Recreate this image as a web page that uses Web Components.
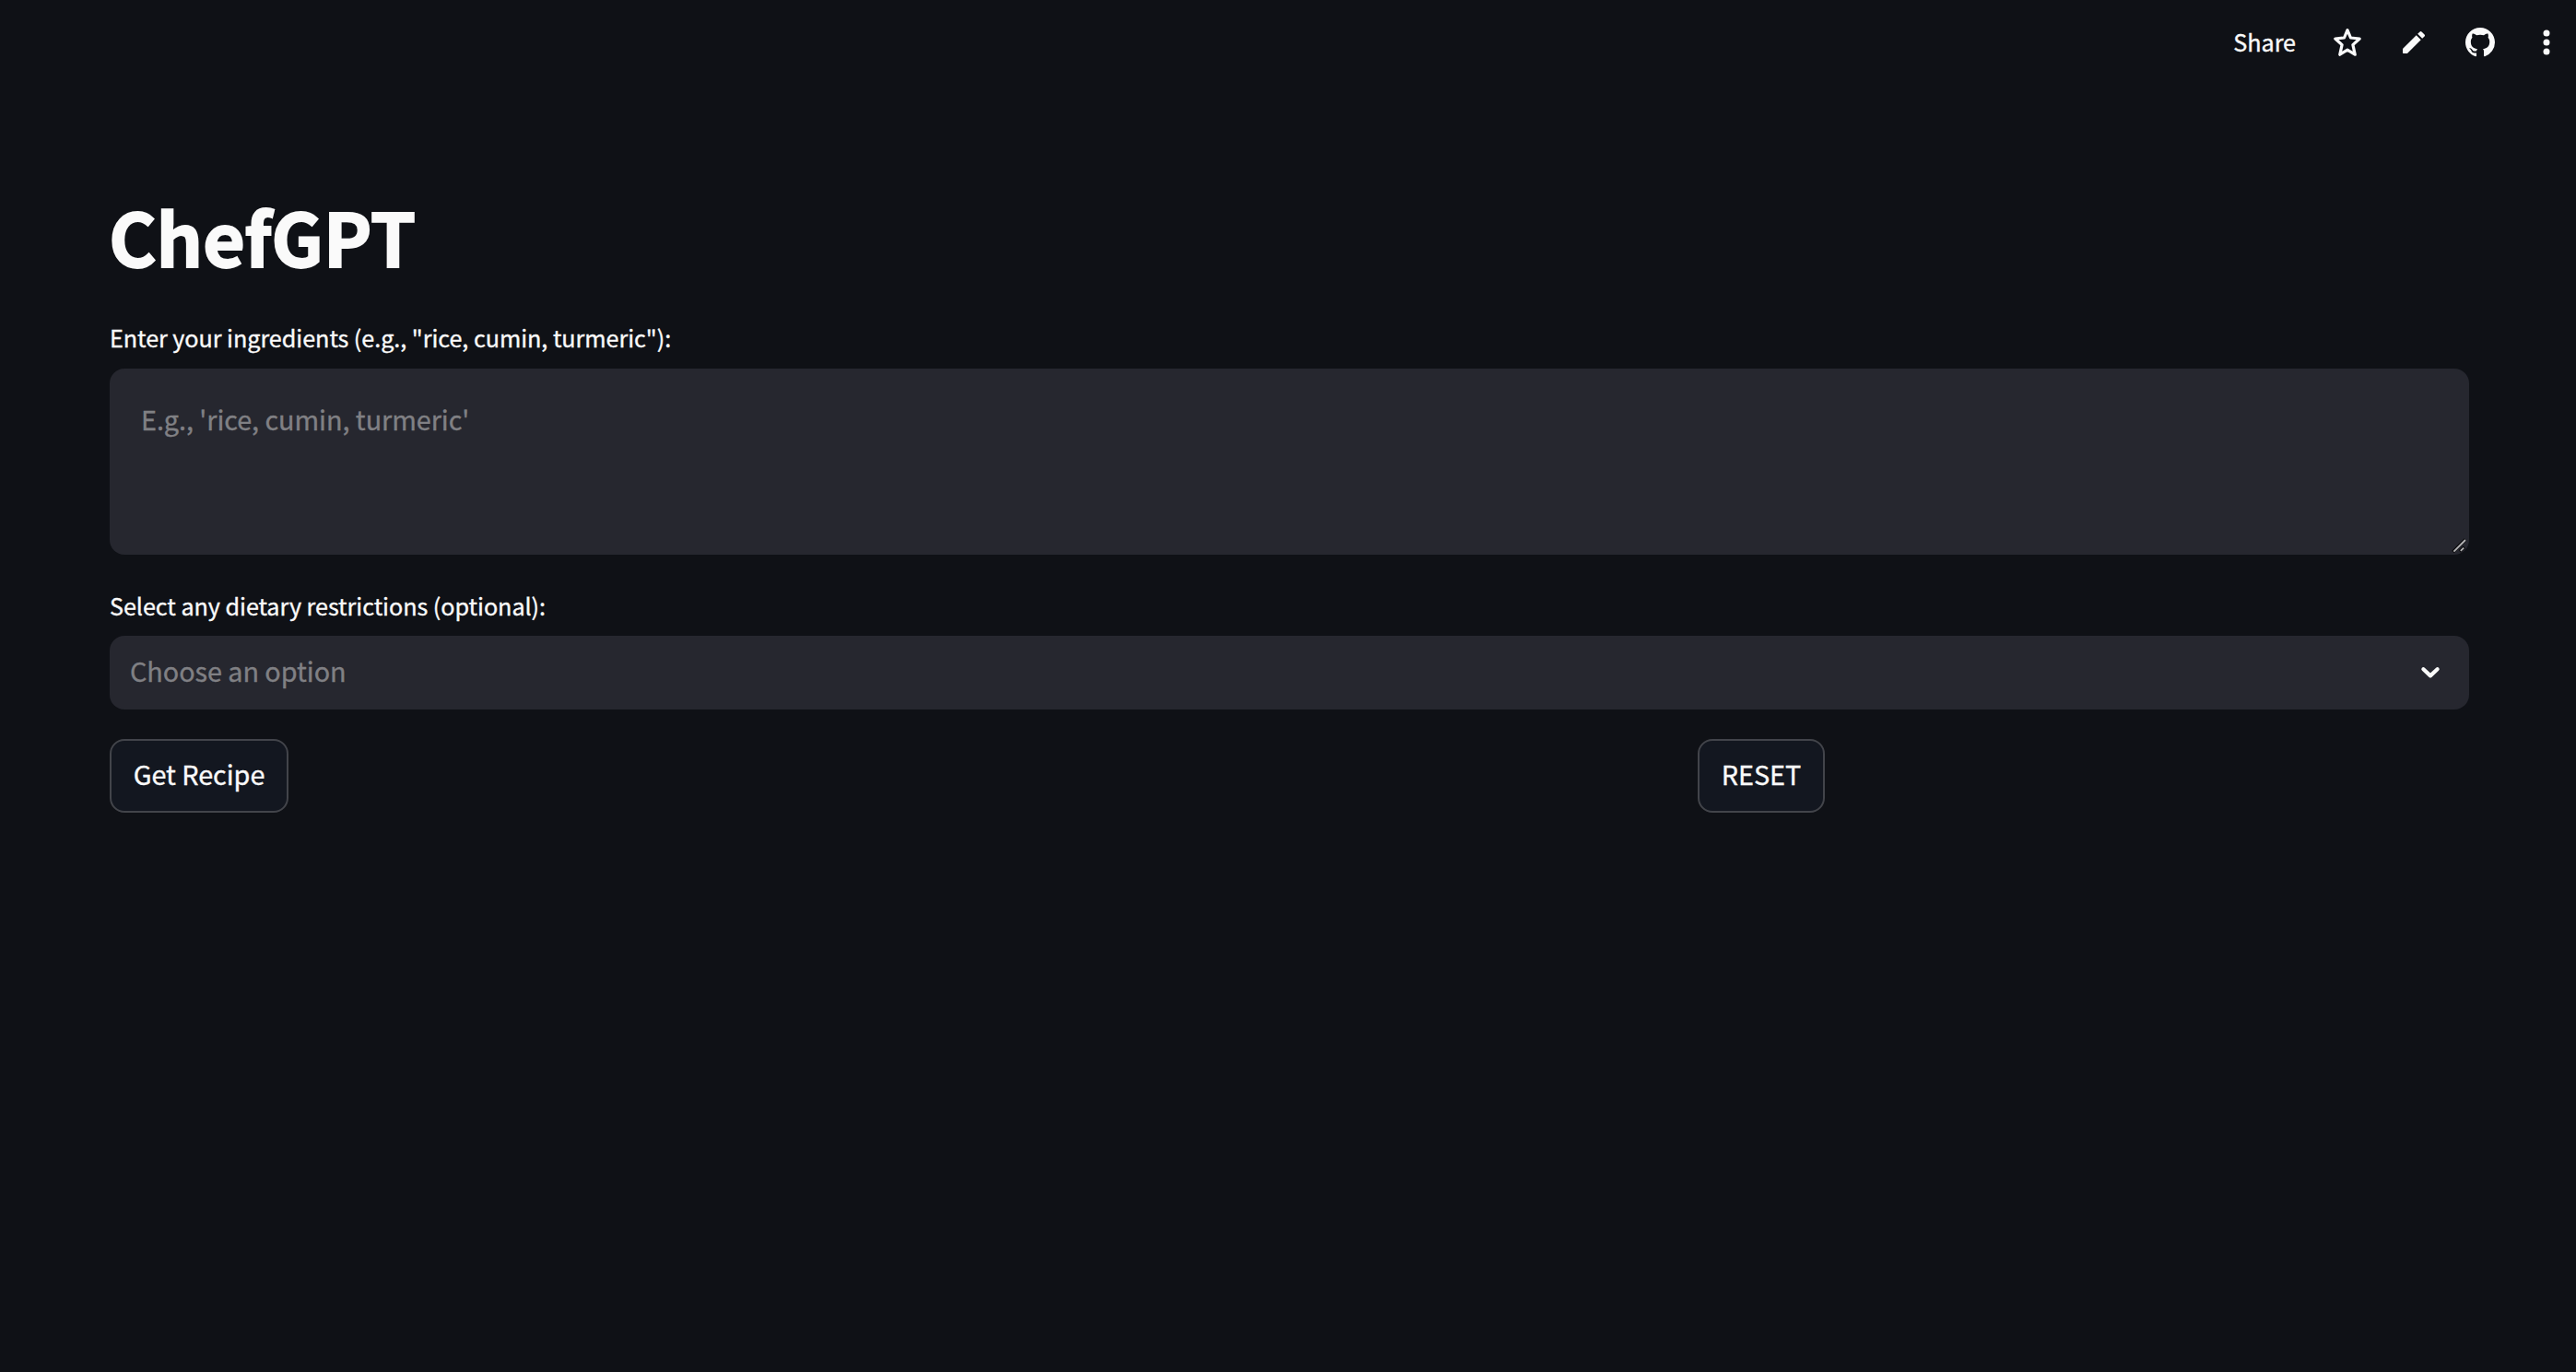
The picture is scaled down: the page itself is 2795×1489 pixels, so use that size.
<!DOCTYPE html>
<html lang="en"><head><meta charset="utf-8"><title>ChefGPT</title>
<style>
html,body{margin:0;min-height:100%;background:#0f1116}
body{font-family:"Noto Sans CJK SC",sans-serif;color:#fafafa;overflow:hidden;-webkit-text-stroke:.35px currentColor;letter-spacing:-.055px}
</style></head><body>
<chef-app></chef-app>
<script>
const define=(name,html)=>{
  const t=document.createElement('template');t.innerHTML=html;
  customElements.define(name,class extends HTMLElement{
    constructor(){super();this.attachShadow({mode:'open'}).append(t.content.cloneNode(true));}
  });
};
define('app-toolbar',`<style>
:host{display:flex;height:92px;box-sizing:border-box;padding-right:16px;justify-content:flex-end;align-items:center;gap:40px}
.share{font-size:25.2px;line-height:36px;margin-top:-2px}
svg{display:block;flex:none;fill:currentColor}
</style>
<span class="share">Share</span>
<svg width="32" height="32" viewBox="0 0 32 32"><path d="M16 2.7 19.5 11 29.2 12 21.9 18.6 24.2 29.2 16 24.2 7.8 29.2 10.1 18.6 2.8 12 12.5 11Z" fill="none" stroke="currentColor" stroke-width="3.2" stroke-linejoin="round"/></svg>
<svg width="32" height="32" viewBox="0 0 24 24"><path d="M3 17.46v3.04c0 .28.22.5.5.5h3.04c.13 0 .26-.05.35-.15L17.81 9.94l-3.75-3.75L3.15 17.1c-.1.1-.15.22-.15.36zM20.71 7.04a.996.996 0 0 0 0-1.41l-2.34-2.34a.996.996 0 0 0-1.41 0l-1.83 1.83 3.75 3.75 1.83-1.83z"/></svg>
<svg width="32" height="32" viewBox="0 0 16 16"><path d="M8 0C3.58 0 0 3.58 0 8c0 3.54 2.29 6.53 5.47 7.59.4.07.55-.17.55-.38 0-.19-.01-.82-.01-1.49-2.01.37-2.53-.49-2.69-.94-.09-.23-.48-.94-.82-1.13-.28-.15-.68-.52-.01-.53.63-.01 1.08.58 1.23.82.72 1.21 1.87.87 2.33.66.07-.52.28-.87.51-1.07-1.78-.2-3.64-.89-3.64-3.95 0-.87.31-1.59.82-2.15-.08-.2-.36-1.02.08-2.12 0 0 .67-.21 2.2.82.64-.18 1.32-.27 2-.27s1.36.09 2 .27c1.53-1.04 2.2-.82 2.2-.82.44 1.1.16 1.92.08 2.12.51.56.82 1.27.82 2.15 0 3.07-1.87 3.75-3.65 3.95.29.25.54.73.54 1.48 0 1.07-.01 1.93-.01 2.2 0 .21.15.46.55.38A8.01 8.01 0 0 0 16 8c0-4.42-3.58-8-8-8z"/></svg>
<svg width="32" height="32" viewBox="0 0 32 32"><circle cx="16" cy="6" r="3.5"/><circle cx="16" cy="16" r="3.5"/><circle cx="16" cy="26" r="3.5"/></svg>`);
define('app-title',`<style>
:host{display:block}h1{margin:0 0 0 -1px;font-size:79.2px;line-height:108px;font-weight:700;letter-spacing:-.35px;-webkit-text-stroke:1.8px currentColor}
</style><h1><slot></slot></h1>`);
define('form-field',`<style>
:host{display:flex;flex-direction:column}
label{font-size:25.2px;line-height:42px;margin-bottom:var(--label-gap,12px)}
</style><label><slot name="label"></slot></label><slot></slot>`);
define('text-area',`<style>
:host{display:flex;box-sizing:border-box;height:202px;padding:34px 4px 3px 34px;border-radius:16px;background:#26272f;color:#808084;font-size:28.8px;line-height:42px;justify-content:space-between}
svg{display:block;align-self:flex-end;overflow:visible}
</style><span><slot></slot></span>
<svg width="16" height="16" viewBox="0 0 16 16" fill="none"><path d="M2.5 15.9 16 2.4M9.8 15.4 15 10.8" stroke="#0b0b0d" stroke-width="3.6"/><path d="M3.4 15.6 16 3M10.8 14.8 14.2 11.6" stroke="#b4b4b6" stroke-width="1.8"/></svg>`);
define('select-box',`<style>
:host{display:flex;box-sizing:border-box;height:80px;padding:0 30px 5px 22px;border-radius:16px;background:#26272f;color:#808084;font-size:28.8px;line-height:42px;align-items:center;justify-content:space-between}
svg{display:block;margin-top:5px}
</style><span><slot></slot></span>
<svg width="24" height="24" viewBox="0 0 24 24" fill="none"><path d="M4.4 8.3 12 15.4 19.6 8.3" stroke="#fafafa" stroke-width="4.2" stroke-linecap="round" stroke-linejoin="round"/></svg>`);
define('action-button',`<style>
:host{display:block}
button{display:block;width:100%;font:inherit;color:inherit;letter-spacing:inherit;box-sizing:border-box;height:80px;padding:0 0 5px;border:2px solid #42444a;border-radius:16px;background:#131720;font-size:28.8px;line-height:42px;white-space:nowrap}
</style><button><slot></slot></button>`);
define('chef-app',`<style>
:host{display:block}
main{display:flex;flex-direction:column;padding:110px 116px 0 119px}
.ing{--label-gap:13px;margin:35px 0 34px}
.row{display:grid;grid-template-columns:1691px 1fr;column-gap:32px;margin-top:32px;justify-items:start}
.get{width:194px}.reset{width:138px}
</style>
<app-toolbar></app-toolbar>
<main><app-title>ChefGPT</app-title>
<form-field class="ing"><span slot="label">Enter your ingredients (e.g., "rice, cumin, turmeric"):</span><text-area>E.g., 'rice, cumin, turmeric'</text-area></form-field>
<form-field><span slot="label">Select any dietary restrictions (optional):</span><select-box>Choose an option</select-box></form-field>
<div class="row"><action-button class="get">Get Recipe</action-button><action-button class="reset">RESET</action-button></div></main>`);
</script></body></html>
